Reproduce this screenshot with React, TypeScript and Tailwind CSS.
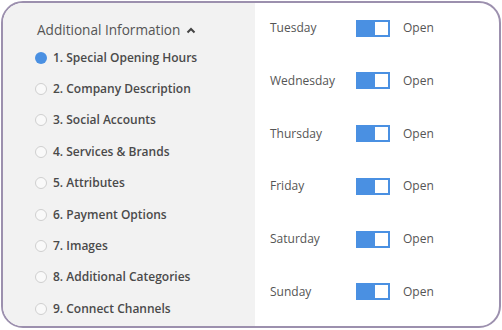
import React from "react";

const items = [
  "1. Special Opening Hours",
  "2. Company Description",
  "3. Social Accounts",
  "4. Services & Brands",
  "5. Attributes",
  "6. Payment Options",
  "7. Images",
  "8. Additional Categories",
  "9. Connect Channels",
];

const days = ["Tuesday", "Wednesday", "Thursday", "Friday", "Saturday", "Sunday"];

export default function App() {
  return (
    <div className="w-[502px] h-[330px] bg-white" style={{ fontFamily: "'Open Sans', sans-serif" }}>
      <div className="ml-[1px] mt-[1px] w-[500px] h-[327px] border-2 border-[#9c90ae] rounded-[22px] overflow-hidden flex">
        <div className="w-[252px] h-full bg-[#f2f2f2] pl-[32px] pt-[16px]">
          <div className="flex items-center h-[22px] pl-[2px] text-[13.6px] text-[#555555]">
            <span>Additional Information</span>
            <svg width="10" height="7" viewBox="0 0 10 7" className="ml-[6px] mt-[1px]">
              <path d="M1.5 5.5 L5 2 L8.5 5.5" stroke="#444" strokeWidth="2" fill="none" />
            </svg>
          </div>
          <div className="flex flex-col mt-[1px]">
            {items.map((t, i) => (
              <div key={t} className="flex items-center h-[31.4px]">
                {i === 0 ? (
                  <div className="w-[12px] h-[12px] rounded-full bg-[#4a90e2]" />
                ) : (
                  <div className="w-[12px] h-[12px] rounded-full border border-[#cfcfcf] bg-[#f9f9f9]" />
                )}
                <span className="ml-[6px] text-[12px] font-semibold text-[#4a4a4a]">{t}</span>
              </div>
            ))}
          </div>
        </div>
        <div className="flex-1 pl-[15px] pt-[16.5px] flex flex-col gap-[35.8px]">
          {days.map((d) => (
            <div key={d} className="flex items-center h-[17px]">
              <div className="w-[86px] text-[12px] text-[#555555]">{d}</div>
              <div className="w-[34px] h-[17px] bg-[#4a90e2] flex items-center justify-end pr-[2px]">
                <div className="w-[13px] h-[13px] bg-white" />
              </div>
              <div className="ml-[13px] text-[12px] text-[#555555]">Open</div>
            </div>
          ))}
        </div>
      </div>
    </div>
  );
}
